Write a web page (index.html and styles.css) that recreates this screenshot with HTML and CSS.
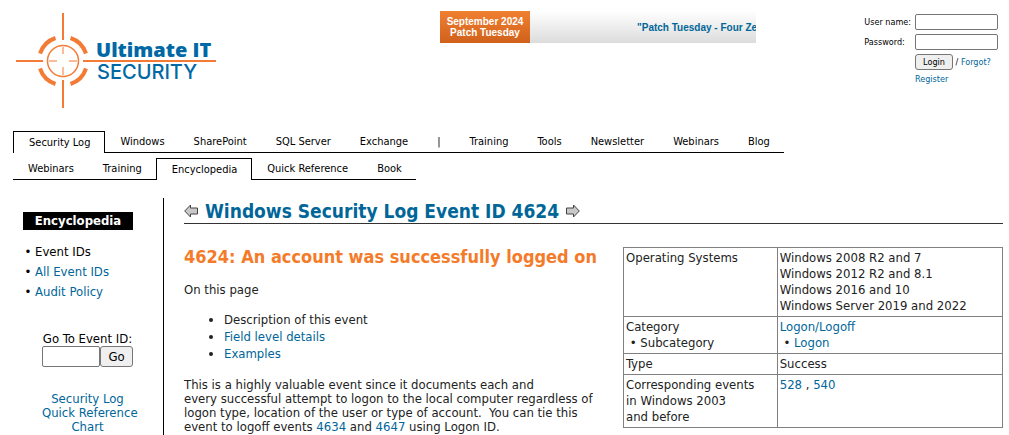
FILE: index.html
```html
<!DOCTYPE html>
<html lang="en">

<head>
    <meta charset="UTF-8">
    <meta name="viewport" content="width=device-width, initial-scale=1.0">
    <title>Windows Security Log Event ID 4624</title>
    <link rel="stylesheet" href="styles.css">
</head>

<body>
    <header class="header">
        <a href="#" class="logo" aria-label="Ultimate IT Security">
            <svg width="208" height="110" viewBox="0 0 208 110">
                <g fill="none" stroke="#f47b36">
                    <path d="M55 7v27M55 74v28M8 55h27M75 55h133" stroke-width="2"/>
                    <path d="M32 47.500A24.500 24.500 0 0 1 47.500 32M62.500 32A24.500 24.500 0 0 1 78 47.500M78 62.500A24.500 24.500 0 0 1 62.500 78M47.500 78A24.500 24.500 0 0 1 32 62.500" stroke-width="4"/>
                    <circle cx="55" cy="55" r="15.500" stroke-width="1.500"/>
                    <path d="M55 41v7M55 61v8M41 55h8M61 55h8" stroke-width="1"/>
                </g>
                <text x="88" y="51" class="logo-top">Ultimate IT</text>
                <text x="89" y="73" class="logo-bottom">SECURITY</text>
            </svg>
        </a>

        <div class="ticker">
            <div class="ticker-title">September 2024<br>Patch Tuesday</div>
            <div class="ticker-track">
                <a href="#">"Patch Tuesday - Four Ze</a>
            </div>
        </div>

        <form class="login">
            <label for="username">User name:</label>
            <input type="text" id="username">
            <label for="password">Password:</label>
            <input type="password" id="password">
            <div class="login-actions">
                <button type="submit">Login</button> / <a href="#">Forgot?</a>
            </div>
            <a href="#" class="register">Register</a>
        </form>
    </header>

    <nav class="tabs">
        <a href="#" class="tab active">Security Log</a>
        <a href="#" class="tab">Windows</a>
        <a href="#" class="tab">SharePoint</a>
        <a href="#" class="tab">SQL Server</a>
        <a href="#" class="tab">Exchange</a>
        <span class="tab">|</span>
        <a href="#" class="tab">Training</a>
        <a href="#" class="tab">Tools</a>
        <a href="#" class="tab">Newsletter</a>
        <a href="#" class="tab">Webinars</a>
        <a href="#" class="tab">Blog</a>
    </nav>
    <nav class="tabs">
        <a href="#" class="tab">Webinars</a>
        <a href="#" class="tab">Training</a>
        <a href="#" class="tab active">Encyclopedia</a>
        <a href="#" class="tab">Quick Reference</a>
        <a href="#" class="tab">Book</a>
    </nav>

    <div class="page">
        <aside class="sidebar">
            <h2>Encyclopedia</h2>
            <ul class="menu">
                <li>Event IDs</li>
                <li><a href="#">All Event IDs</a></li>
                <li><a href="#">Audit Policy</a></li>
            </ul>
            <form class="goto">
                <label for="eventId">Go To Event ID:</label>
                <div class="goto-row">
                    <input type="text" id="eventId">
                    <button type="submit">Go</button>
                </div>
            </form>
            <a href="#" class="chart-link">Security Log<br>Quick Reference<br>Chart</a>
        </aside>

        <main class="content">
            <h1>
                <a href="#" aria-label="Previous event">
                    <svg width="15" height="14" viewBox="0 0 15 14">
                        <path d="M.7 7L6.500 1v3H13.500v6H6.500v3z" fill="#c8c8c8" stroke="#444"/>
                    </svg>
                </a>
                <span>Windows Security Log Event ID 4624</span>
                <a href="#" aria-label="Next event">
                    <svg width="15" height="14" viewBox="0 0 15 14">
                        <path d="M14.300 7L8.500 1v3H1.500v6h7v3z" fill="#c8c8c8" stroke="#444"/>
                    </svg>
                </a>
            </h1>

            <div class="event">
                <div class="description">
                    <h2>4624: An account was successfully logged on</h2>
                    <p>On this page</p>
                    <ul>
                        <li>Description of this event</li>
                        <li><a href="#">Field level details</a></li>
                        <li><a href="#">Examples</a></li>
                    </ul>
                    <p>This is a highly valuable event since it documents each and<br>
                        every successful attempt to logon to the local computer regardless of<br>
                        logon type, location of the user or type of account.&nbsp; You can tie this<br>
                        event to logoff events <a href="#">4634</a> and <a href="#">4647</a> using Logon ID.</p>
                </div>

                <table class="details">
                    <tr>
                        <td>Operating Systems</td>
                        <td>Windows 2008 R2 and 7<br>Windows 2012 R2 and 8.1<br>Windows 2016 and 10<br>Windows Server 2019 and 2022</td>
                    </tr>
                    <tr>
                        <td>Category<br>&nbsp;• Subcategory</td>
                        <td><a href="#">Logon/Logoff</a><br>&nbsp;• <a href="#">Logon</a></td>
                    </tr>
                    <tr>
                        <td>Type</td>
                        <td>Success</td>
                    </tr>
                    <tr>
                        <td>Corresponding events<br>in Windows 2003<br>and before</td>
                        <td><a href="#">528</a> , <a href="#">540</a></td>
                    </tr>
                </table>
            </div>
        </main>
    </div>
</body>

</html>
```
FILE: styles.css
```css
* {
    box-sizing: border-box;
}

body {
    margin: 0;
    padding: 6px 6px 0 8px;
    background: white;
    color: #000;
    font-family: "DejaVu Sans Condensed", "DejaVu Sans", sans-serif;
    font-size: 13px;
}

a {
    color: #006699;
    text-decoration: none;
}

input {
    padding: 0 2px;
    border: 1px solid #767676;
    border-radius: 2px;
    background: white;
}

button {
    border: 1px solid #767676;
    border-radius: 3px;
    background: #efefef;
    font-family: inherit;
    cursor: pointer;
}

.header {
    display: grid;
    grid-template-columns: 432px minmax(0, 316px) auto;
    align-items: start;
    height: 125px;
}

.logo-top {
    font: 800 20px "Open Sans", sans-serif;
    fill: #0069a5;
}

.logo-bottom {
    font: 500 20px Inter, sans-serif;
    fill: #0069a5;
}

.ticker {
    display: flex;
    height: 32px;
    margin-top: 5px;
    font: bold 10px/11px "Liberation Sans", Arial, sans-serif;
}

.ticker-title {
    width: 90px;
    padding-top: 5px;
    background: linear-gradient(#f08030, #d0611c);
    color: white;
    text-align: center;
}

.ticker-track {
    flex: 1;
    padding: 11px 0 0 107px;
    overflow: hidden;
    background: linear-gradient(#fff, #dcdcdc);
    white-space: nowrap;
}

.login {
    display: grid;
    grid-template-columns: auto 83px;
    gap: 4px;
    justify-content: end;
    align-items: center;
    margin: 8px 5px 0 0;
    font-size: 9px;
}

.login input {
    width: 83px;
    height: 16px;
}

.login-actions,
.register {
    grid-column: 2;
    white-space: nowrap;
}

.login button {
    width: 38px;
    height: 16px;
    padding: 0;
    font-size: 9px;
}

.tabs {
    display: flex;
    width: max-content;
    height: 22px;
    margin: 0 0 5px 5px;
    font-size: 11px;
    line-height: 22px;
}

.tab {
    padding: 0 14px 0 15px;
    border-bottom: 1px solid black;
    color: black;
}

.tab.active {
    border: 1px solid black;
    border-bottom: none;
}

.page {
    display: flex;
    margin-top: 18px;
}

.sidebar {
    width: 156px;
    padding: 14px 30px 0 15px;
    border-right: 1px solid black;
}

.sidebar h2 {
    margin: 0;
    background: black;
    color: white;
    font-size: 13px;
    line-height: 18px;
    text-align: center;
}

.menu {
    margin: 12px 0 30px;
    padding-left: 12px;
    line-height: 20px;
}

.menu li::marker {
    content: "• ";
}

.goto,
.chart-link {
    display: block;
    margin-left: 19px;
    text-align: center;
    white-space: nowrap;
    line-height: 14px;
}

.goto-row {
    display: flex;
}

.goto input {
    width: 58px;
    height: 21px;
}

.goto button {
    width: 33px;
    height: 21px;
    padding: 0;
    font-size: 13px;
}

.chart-link {
    margin-top: 25px;
}

.content {
    flex: 1;
    padding-left: 20px;
}

h1 {
    display: flex;
    gap: 6px;
    align-items: center;
    height: 26px;
    margin: 0 0 23px;
    border-bottom: 1px solid #333;
    color: #006699;
    font-size: 19px;
}

h1 svg {
    display: block;
}

.event {
    display: flex;
    justify-content: space-between;
    align-items: flex-start;
    color: #222;
}

.description {
    line-height: 14px;
    white-space: nowrap;
}

.description h2 {
    margin: 0;
    color: #f47b29;
    font-size: 18px;
    line-height: 20px;
}

.description p {
    margin: 16px 0 14px;
}

.description ul {
    margin: 14px 0;
    padding-left: 40px;
    line-height: 17px;
}

.details {
    width: 380px;
    border-collapse: collapse;
    line-height: 16px;
}

.details td {
    width: 226px;
    padding: 2px;
    border: 1px solid #808080;
    vertical-align: top;
}

.details td:first-child {
    width: 154px;
}
```
